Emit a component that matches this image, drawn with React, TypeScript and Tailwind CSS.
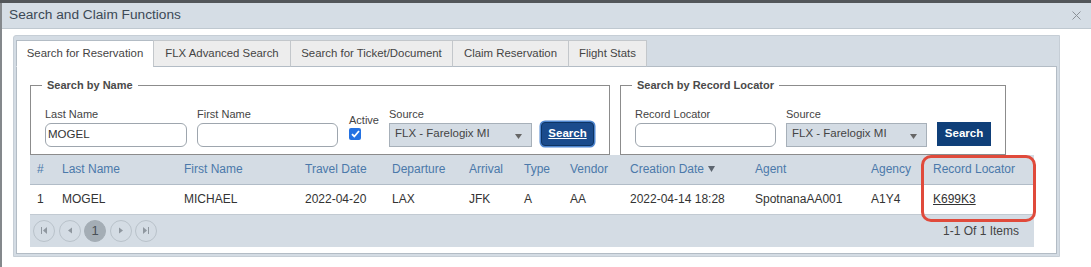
import React from 'react';

const cols = [
    { label: '#', w: 'w-[25px]' },
    { label: 'Last Name', w: 'w-[122px]' },
    { label: 'First Name', w: 'w-[121px]' },
    { label: 'Travel Date', w: 'w-[87px]' },
    { label: 'Departure', w: 'w-[77px]' },
    { label: 'Arrival', w: 'w-[55px]' },
    { label: 'Type', w: 'w-[46px]' },
    { label: 'Vendor', w: 'w-[60px]' },
    { label: 'Creation Date', w: 'w-[125px]', sort: true },
    { label: 'Agent', w: 'w-[116px]' },
    { label: 'Agency', w: 'w-[62px]' },
    { label: 'Record Locator', w: 'w-[108px]' },
];

const row = ['1', 'MOGEL', 'MICHAEL', '2022-04-20', 'LAX', 'JFK', 'A', 'AA', '2022-04-14 18:28', 'SpotnanaAA001', 'A1Y4', 'K699K3'];

const tabs = [
    { label: 'Search for Reservation', w: 'w-[137px]', active: true },
    { label: 'FLX Advanced Search', w: 'w-[137px]' },
    { label: 'Search for Ticket/Document', w: 'w-[162px]' },
    { label: 'Claim Reservation', w: 'w-[116px]' },
    { label: 'Flight Stats', w: 'w-[79px]' },
];

const Label: React.FC<{ children: React.ReactNode }> = ({ children }) => (
    <div className="h-[13px] leading-[13px] text-[11px] text-[#444] mb-[2px] whitespace-nowrap">{children}</div>
);

const TextInput: React.FC<{ value?: string }> = ({ value }) => (
    <div className="h-[24px] rounded-[6px] border border-[#9ea6ae] bg-white pl-[2px] flex items-center text-[11.5px] text-[#333]">
        {value}
    </div>
);

const SourceSelect: React.FC = () => (
    <div className="h-[24px] border border-[#a7b0b9] bg-[#d4dce4] pl-[5px] pr-[9px] flex items-center justify-between text-[11.5px] text-[#444]">
        <span className="-mt-[3px]">FLX - Farelogix MI</span>
        <svg width="7" height="5" viewBox="0 0 7 5" className="mt-[2px]">
            <path d="M0 0h7L3.5 5z" fill="#666" />
        </svg>
    </div>
);

const PagerIcon: React.FC<{ kind: 'first' | 'prev' | 'next' | 'last' }> = ({ kind }) => (
    <svg width="8" height="7" viewBox="0 0 8 7">
        {kind === 'first' && (
            <>
                <rect x="1" y="0" width="1" height="7" fill="#8f979f" />
                <path d="M7 0v7L3 3.5z" fill="#8f979f" />
            </>
        )}
        {kind === 'prev' && <path d="M6 0.5v6L2 3.5z" fill="#8f979f" />}
        {kind === 'next' && <path d="M2 0.5v6L6 3.5z" fill="#8f979f" />}
        {kind === 'last' && (
            <>
                <path d="M1 0v7L5 3.5z" fill="#8f979f" />
                <rect x="6" y="0" width="1" height="7" fill="#8f979f" />
            </>
        )}
    </svg>
);

export default function App() {
    return (
        <div className="w-[1091px] h-[267px] overflow-hidden bg-white font-['Liberation_Sans',Arial,sans-serif]">
            {/* backdrop strip */}
            <div className="h-[3px] bg-[#52565a]" />
            <div className="border-l-2 border-[#84888c] h-[264px]">
                {/* modal header */}
                <div className="h-[26px] bg-[#d5dde5] border-b border-[#bfc8d0] flex items-center justify-between pl-[7px] pr-[10px]">
                    <span className="text-[13.7px] text-[#3c4956]">Search and Claim Functions</span>
                    <svg width="9" height="9" viewBox="0 0 9 9">
                        <path d="M0.5 0.5l8 8M8.5 0.5l-8 8" stroke="#8a9096" strokeWidth="1" />
                    </svg>
                </div>

                {/* tab container */}
                <div className="mt-[6px] ml-[11px] w-[1047px] border border-[#c6ced6] bg-[#d4dce4] rounded-tl-[3px] pt-[4px] px-[2px] pb-[2px]">
                    <div className="flex pl-0 -mb-px relative">
                        {tabs.map((t) => (
                            <div
                                key={t.label}
                                className={`${t.w} h-[27px] flex items-center justify-center text-[11.4px] text-[#444] border border-r-0 last:border-r ${
                                    t.active ? 'bg-white border-[#b3bcc5] border-b-white' : 'bg-[#ededed] border-[#c3c7cb] border-b-[#b3bcc5]'
                                }`}
                            >
                                {t.label}
                            </div>
                        ))}
                    </div>

                    <div className="bg-white border border-[#b3bcc5] h-[188px] pt-[12px] pl-[13px] pr-[22px]">
                        <div className="flex gap-[10px]">
                            <fieldset className="w-[580px] border border-[#8c8c8c] pl-[11px] pt-[16px] pb-[7px]">
                                <legend className="px-[5px] text-[11px] font-bold text-[#4a4a4a] leading-[13px]">Search by Name</legend>
                                <div className="ml-[3px] flex items-end">
                                    <div className="w-[142px]">
                                        <Label>Last Name</Label>
                                        <TextInput value="MOGEL" />
                                    </div>
                                    <div className="w-[141px] ml-[10px]">
                                        <Label>First Name</Label>
                                        <TextInput />
                                    </div>
                                    <div className="w-[30px] ml-[11px] flex flex-col mb-[7px]">
                                        <div className="h-[13px] leading-[13px] text-[11px] text-[#444] mb-px">Active</div>
                                        <span className="w-[12px] h-[12px] rounded-[2px] bg-[#2472e2] flex items-center justify-center">
                                            <svg width="9" height="8" viewBox="0 0 9 8">
                                                <path d="M1 4.2l2.3 2.3L8 1" stroke="white" strokeWidth="1.8" fill="none" />
                                            </svg>
                                        </span>
                                    </div>
                                    <div className="w-[143px] ml-[10px]">
                                        <Label>Source</Label>
                                        <SourceSelect />
                                    </div>
                                    <button className="ml-[9px] mb-px w-[53px] h-[24px] rounded-[4px] bg-[#1a4b8c] border border-[#0d3463] ring-[1.5px] ring-[#4f86cf] text-white text-[11.5px] font-bold underline">
                                        Search
                                    </button>
                                </div>
                            </fieldset>

                            <fieldset className="w-[386px] border border-[#8c8c8c] pl-[11px] pt-[16px] pb-[7px]">
                                <legend className="px-[5px] text-[11px] font-bold text-[#4a4a4a] leading-[13px]">Search by Record Locator</legend>
                                <div className="ml-[3px] flex items-end">
                                    <div className="w-[141px]">
                                        <Label>Record Locator</Label>
                                        <TextInput />
                                    </div>
                                    <div className="w-[141px] ml-[10px]">
                                        <Label>Source</Label>
                                        <SourceSelect />
                                    </div>
                                    <button className="ml-[10px] mb-px w-[54px] h-[24px] bg-[#0f3f79] text-white text-[11.5px] font-bold">
                                        Search
                                    </button>
                                </div>
                            </fieldset>
                        </div>

                        {/* results grid */}
                        <div className="relative w-[1004px]">
                            <table className="w-[1004px] table-fixed text-[12px]">
                                <colgroup>
                                    {cols.map((c) => (
                                        <col key={c.label} className={c.w} />
                                    ))}
                                </colgroup>
                                <thead>
                                    <tr className="h-[29px] bg-[#d4dce4] border-b border-[#b1bcc7]">
                                        {cols.map((c) => (
                                            <th key={c.label} className="pl-[7px] text-left font-normal text-[#4b79aa] whitespace-nowrap">
                                                <span className="inline-flex items-center gap-[4px]">
                                                    {c.label}
                                                    {c.sort && (
                                                        <svg width="7" height="6" viewBox="0 0 7 6">
                                                            <path d="M0 0h7L3.5 6z" fill="#5d6670" />
                                                        </svg>
                                                    )}
                                                </span>
                                            </th>
                                        ))}
                                    </tr>
                                </thead>
                                <tbody>
                                    <tr className="h-[30px] bg-white border-b border-[#c2cad2]">
                                        {row.map((v, i) => (
                                            <td key={i} className="pl-[7px] text-[#333] whitespace-nowrap">
                                                {i === row.length - 1 ? <span className="underline">{v}</span> : v}
                                            </td>
                                        ))}
                                    </tr>
                                </tbody>
                            </table>
                            <div className="h-[32px] bg-[#d4dce4] flex items-center justify-between pl-[3px] pr-[15px]">
                                <div className="flex items-center gap-[3.5px]">
                                    {(['first', 'prev'] as const).map((k) => (
                                        <span key={k} className="w-[22px] h-[22px] rounded-full border border-[#b9c2ca] flex items-center justify-center">
                                            <PagerIcon kind={k} />
                                        </span>
                                    ))}
                                    <span className="w-[22px] h-[22px] rounded-full bg-[#a4adb5] border border-[#a4adb5] flex items-center justify-center text-[13px] text-[#4a5057]">
                                        1
                                    </span>
                                    {(['next', 'last'] as const).map((k) => (
                                        <span key={k} className="w-[22px] h-[22px] rounded-full border border-[#b9c2ca] flex items-center justify-center">
                                            <PagerIcon kind={k} />
                                        </span>
                                    ))}
                                </div>
                                <span className="text-[12px] text-[#444]">1-1 Of 1 Items</span>
                            </div>
                            {/* highlight around record locator column */}
                            <div className="absolute left-[891px] top-0 w-[115px] h-[67px] border-[3px] border-[#e04a3b] rounded-[10px] pointer-events-none" />
                        </div>
                    </div>
                </div>
            </div>
        </div>
    );
}
